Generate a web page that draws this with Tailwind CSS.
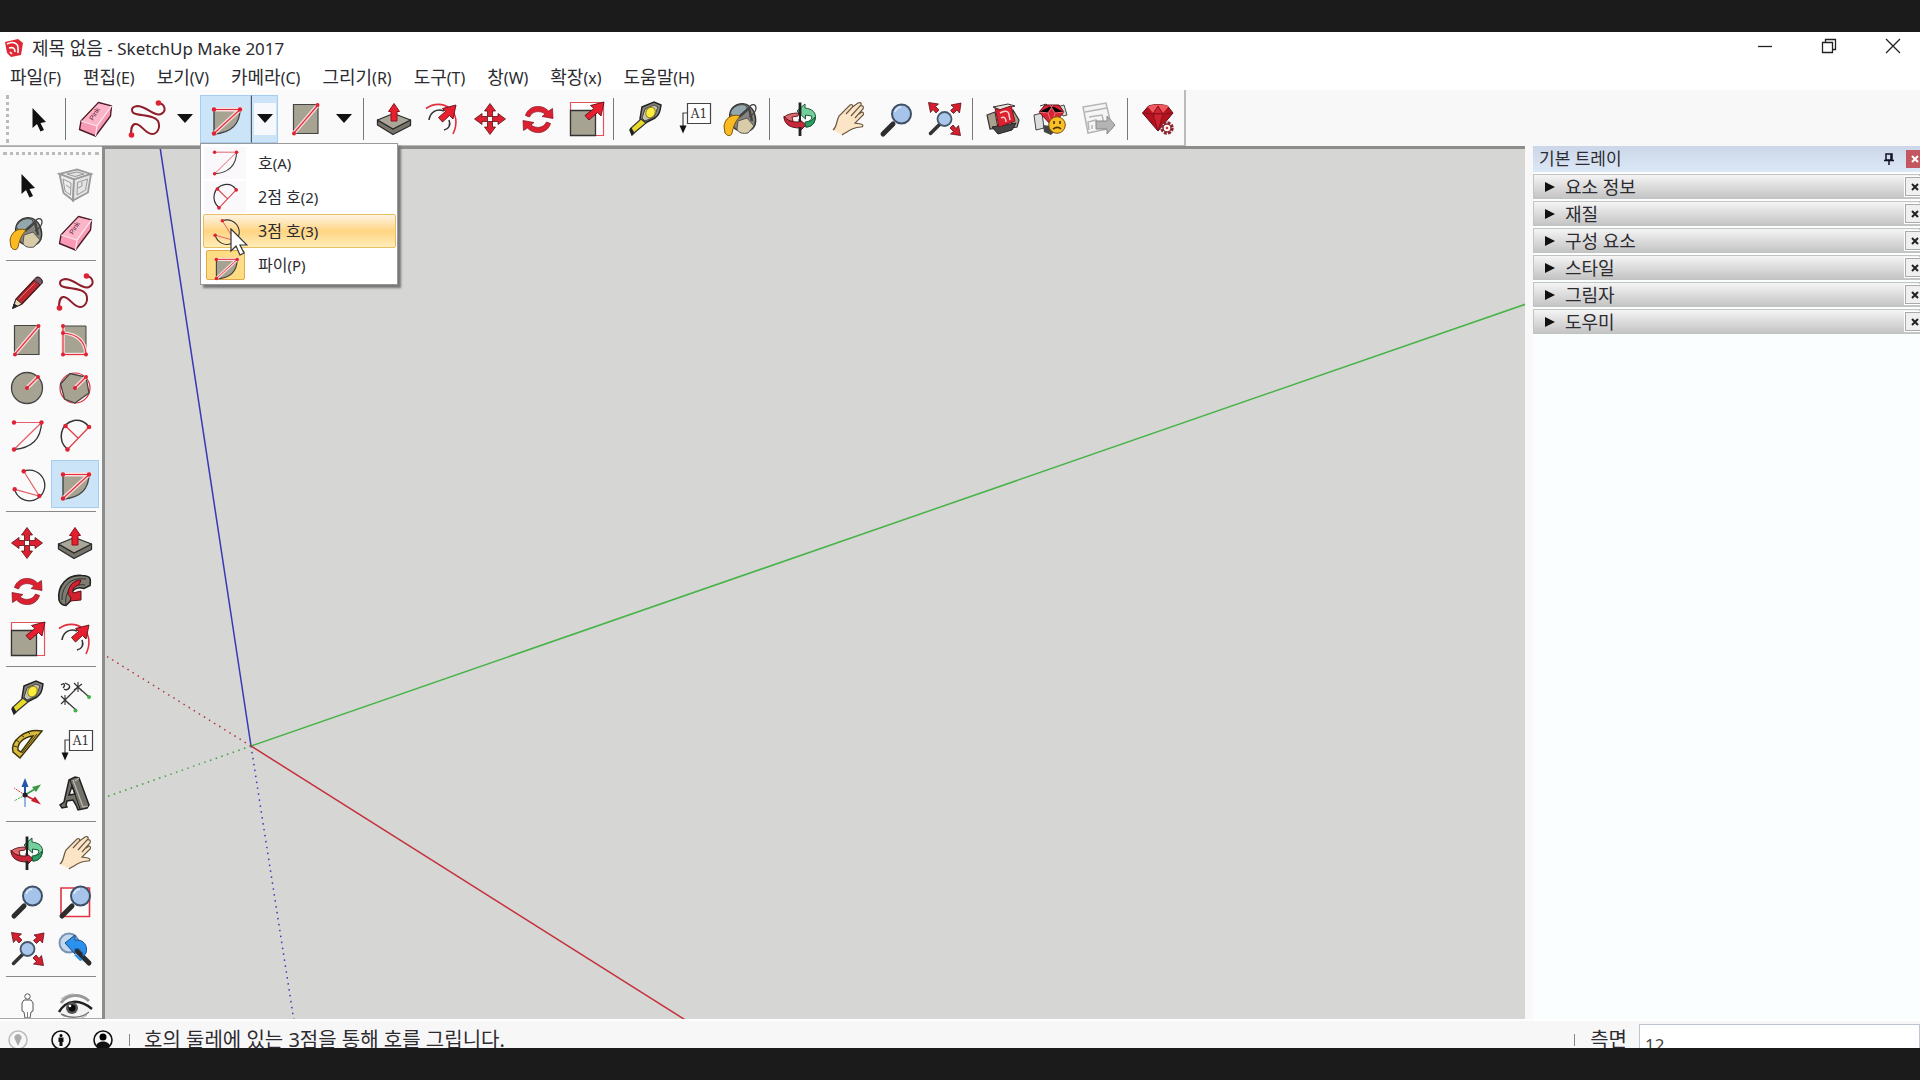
<!DOCTYPE html>
<html lang="ko">
<head>
<meta charset="utf-8">
<title>제목 없음 - SketchUp Make 2017</title>
<script src="https://cdn.jsdelivr.net/npm/@tailwindcss/browser@4"></script>
</head>
<body class="bg-[#1b1b1b] font-['Noto_Sans','Noto_Sans_CJK_KR',sans-serif] text-[#2b2b30]">

<!-- Icon library, 40x40 grid -->
<svg class="hidden" xmlns="http://www.w3.org/2000/svg">
  <defs>
    <g id="magnifier"><path d="M17 25 7 35" stroke="#2d2d2d" stroke-width="5" stroke-linecap="round"/><circle cx="25.500" cy="15" r="9.500" fill="#a6c4ea" stroke="#3f5066" stroke-width="2"/><path d="M19 13a7 7 0 0 1 6-5" fill="none" stroke="#dceafa" stroke-width="1.500"/></g>
  </defs>
  <symbol id="select" viewBox="0 0 40 40"><path d="M14.500 9V29l4.500-4 3.500 7.500 3.500-1.600-3.500-7 5.500-.9Z" fill="#111"/></symbol>
  <symbol id="component" viewBox="0 0 40 40"><g fill="none" stroke="#9a9a9a"><path d="m4.500 9 14.500 5.500L36 9 22 4.500Z" fill="#e2e2e2" stroke-width="1.800"/><path d="m4.500 9 4 19 9.500 7.500 1-21Z" fill="#ececec" stroke-width="1.800"/><path d="M19 14.500 36 9l-3 18.500-15 8Z" fill="#e4e4e4" stroke-width="1.800"/><path d="m8 14 2 12 5.500 4 .5-12ZM22.500 17.500l10-3.500-2 11-8.500 5ZM12 9l8 2.500L29 9l-7-2ZM23 23l4-2v-4M11 20l4 3"/></g></symbol>
  <symbol id="paint" viewBox="0 0 40 40"><path d="M10 11C14 4 24 3 28 7c5 3 8 12 6 19-3 7-12 9-18 5C9 27 7 17 10 11Z" fill="#85847d" stroke="#333" stroke-width="1.400"/><path d="M10 12C14 5 24 4 26 8c1 4-3 8-8 9-5 1-10-1-8-5Z" fill="#93a8ac" stroke="#444"/><path d="m17 22 9-3 7 8-6 7c-5 1-10 0-11-4Z" fill="#d8cba7" stroke="#555"/><path d="M18 18 28 9l3 13" fill="none" stroke="#444" stroke-width="2.500"/><path d="M28 9c2-5 7-4 7 0 0 5-4 7-7 9" fill="none" stroke="#444" stroke-width="1.300"/><path d="M3 27C4 20 10 14 19 17c-4 5-6 8-8 17-1 4-5 3-7 0Z" fill="#fbba22" stroke="#7b5710"/></symbol>
  <symbol id="eraser" viewBox="0 0 40 40"><path d="M23.500 3.500 36.500 7l-1 10-15 20-16-6.500L6 22Z" fill="#f99ab5" stroke="#4d1c2a" stroke-width="1.400" stroke-linejoin="round"/><path d="M23.500 4.500 36 7.500 22 27 7 22Z" fill="#fbb4c8"/><path d="m6 22 16 5L36.500 7M22 27l-1.500 10" fill="none" stroke="#fde3ea" stroke-width="1.300"/><text x="18" y="22" transform="rotate(-58 18 22)" font-family="Liberation Sans" font-size="7" fill="#5c1e33">Pink</text></symbol>
  <symbol id="pencil" viewBox="0 0 40 40"><path d="m6 36 3-9L29 6c2-2 7 1 6 5L15 32Z" fill="#b9282f" stroke="#3d1414" stroke-width="1.300"/><path d="m6 36 3-9 6 5Z" fill="#ead6b4" stroke="#333"/><path d="m6 36 1-4 3 2Z" fill="#222" stroke="#222"/><path d="m27 8 6 5 2-2c1-4-4-7-6-5Z" fill="#7c5560" stroke="#333"/><path d="M12 27 28 11" stroke="#e06767"/></symbol>
  <symbol id="freehand" viewBox="0 0 40 40"><path d="M31.500 4C38 5 40 12 34 15 27 18 20 7 10 7 3 8 4 14 9 15c7 2 18 1 22 7 3 7-1 13-6 13C18 35 14 24 8 25c-4 1-4 6-4 11" fill="none" stroke="#8f1f2b" stroke-width="2"/><circle cx="31.500" cy="4" r="2.800" fill="#dd2233"/><circle cx="4.500" cy="36" r="2.800" fill="#dd2233"/></symbol>
  <symbol id="rect" viewBox="0 0 40 40"><path d="M7.500 5.500H32v29H7.500Z" fill="#a6a392" stroke="#444" stroke-width="1.200"/><path d="M8 34 31.500 6.500" stroke="#fbdcdc" stroke-width="4"/><path d="M8 34 31.500 6.500" stroke="#e0303c" stroke-width="1.200"/><g fill="#dd2233"><circle cx="8" cy="34.500" r="2"/><circle cx="31.500" cy="6" r="2"/></g></symbol>
  <symbol id="rotrect" viewBox="0 0 40 40"><path d="M8 6h23v28H8Z" fill="#a6a392" stroke="#444"/><g fill="none"><path d="M8 6v28.500h23M8 13C22 14 30 20 31 34" stroke="#fbdcdc" stroke-width="3.500"/><path d="M8 6v28.500h23M8 13C22 14 30 20 31 34" stroke="#e0303c" stroke-width="1.200"/></g><g fill="#dd2233"><circle cx="8" cy="6" r="2"/><circle cx="8" cy="13" r="2"/><circle cx="8" cy="34.500" r="2"/><circle cx="31" cy="34.500" r="2"/></g></symbol>
  <symbol id="circle" viewBox="0 0 40 40"><circle cx="20" cy="20" r="15.500" fill="#a6a392" stroke="#444" stroke-width="1.300"/><path d="M20 20 31 9" stroke="#fbdcdc" stroke-width="4"/><path d="M20 20 31 9" stroke="#e0303c" stroke-width="1.200"/><g fill="#dd2233"><circle cx="20" cy="20" r="2"/><circle cx="31" cy="9" r="2"/></g></symbol>
  <symbol id="polygon" viewBox="0 0 40 40"><circle cx="20" cy="20" r="15" fill="#fff" stroke="#e0303c" stroke-width="1.200"/><path d="M5.500 16 15 5.500 31 9l3 16-14 10-10.500-4Z" fill="#a6a392" stroke="#444" stroke-width="1.300"/><path d="M20 20 31 9" stroke="#fbdcdc" stroke-width="4"/><path d="M20 20 31 9" stroke="#e0303c" stroke-width="1.200"/><g fill="#dd2233"><circle cx="20" cy="20" r="2"/><circle cx="31" cy="9" r="2"/></g></symbol>
  <symbol id="arc" viewBox="0 0 40 40"><path d="M34.500 6.500C34 22 25 32 7 33.500" fill="none" stroke="#333" stroke-width="1.300"/><path d="M7 6.500h27.500L7 33.500" fill="none" stroke="#e36068" stroke-width="1.200"/><g fill="#dd2233"><circle cx="7" cy="6.500" r="2.200"/><circle cx="34.500" cy="6.500" r="2.200"/><circle cx="7" cy="33.500" r="2.200"/></g></symbol>
  <symbol id="arc2" viewBox="0 0 40 40"><path d="M12.500 33.500C2 24 5 8 19 4.500 25 3.500 31 6 34 11" fill="none" stroke="#333" stroke-width="1.500"/><path d="M34 11 12.500 33.500M10.500 10 23 22" fill="none" stroke="#e0404a" stroke-width="1.300"/><g fill="#dd2233"><circle cx="10.500" cy="10" r="2.300"/><circle cx="34" cy="11" r="2.300"/><circle cx="12.500" cy="33.500" r="2.300"/></g></symbol>
  <symbol id="arc3" viewBox="0 0 40 40"><path d="M16.700 7.300A15.300 15.300 0 1 1 7.700 25.300" fill="none" stroke="#333" stroke-width="1.300"/><path d="m16.700 7.300 15.600 24.700-24.600-6.700" fill="none" stroke="#e36068" stroke-width="1.200"/><g fill="#dd2233"><circle cx="16.700" cy="7.300" r="2.200"/><circle cx="7.700" cy="25.300" r="2.200"/><circle cx="32.300" cy="32" r="2.200"/></g></symbol>
  <symbol id="pie" viewBox="0 0 40 40"><path d="M8 10h26C34 25 25 34 8 35Z" fill="#a6a392" stroke="#444" stroke-width="1.400"/><path d="M8 10.500h26L8 34.500" fill="none" stroke="#fbdcdc" stroke-width="4"/><path d="M8 10.500h26L8 34.500" fill="none" stroke="#e0303c" stroke-width="1.200"/><g fill="#dd2233"><circle cx="8" cy="10.500" r="2.200"/><circle cx="34" cy="10.500" r="2.200"/><circle cx="8" cy="34.500" r="2.200"/></g></symbol>
  <symbol id="move" viewBox="0 0 40 40"><g fill="#dd2030" stroke="#5d1018" stroke-width=".8"><path id="mv" d="m20 4.500 5.500 7.500h-3v5.500h-5V12h-3Z"/><use href="#mv" transform="rotate(90 20 20)"/><use href="#mv" transform="rotate(180 20 20)"/><use href="#mv" transform="rotate(270 20 20)"/></g></symbol>
  <symbol id="pushpull" viewBox="0 0 40 40"><path d="m3.500 21 15.500 9 17.500-9v5.500L19 35.500l-15.500-9.500Z" fill="#77756a" stroke="#2b2b2b" stroke-width="1.300" stroke-linejoin="round"/><path d="m3.500 21 16-6.500 17 6.500L19 30Z" fill="#aaa798" stroke="#2b2b2b" stroke-width="1.300" stroke-linejoin="round"/><path d="m20 4.500 5.500 8h-2.500V22h-6v-9.500H14.500Z" fill="#e81f2e" stroke="#8a121c"/></symbol>
  <symbol id="rotate" viewBox="0 0 40 40"><g fill="#dd2030" stroke="#7a1620" stroke-width=".7"><path id="rt" d="M7.500 16.500C10 7 23 4 30.500 12l4-2.500.5 10-11-2 3-2.500C22 11 14 12 11.500 18Z"/><use href="#rt" transform="rotate(180 20 20.500)"/></g></symbol>
  <symbol id="followme" viewBox="0 0 40 40"><path d="M4 29C2 15 12 3 27 4.500c9 .5 9 3 8 10l-6 3c-9-3-14 3-13 12l-5 5C7 34 5 32 4 29Z" fill="#7d7c70" stroke="#222" stroke-width="1.600"/><path d="M7 29C7 14 16 6 31 8M11 34C9 20 18 12 30 14" fill="none" stroke="#333"/><path d="M13 23c0-8 6-14 13-14l-2 5c-5 1-7 4-6 8l8-2v9l-11 1 1-3Z" fill="#d3202e" stroke="#5e0e17"/></symbol>
  <symbol id="scale" viewBox="0 0 40 40"><path d="M4.500 3.500h33v33h-33Z" fill="#fff" stroke="#e4525b" stroke-width="1.200"/><path d="M4.500 11.500h25v25h-25Z" fill="#a6a392" stroke="#333" stroke-width="1.300"/><path d="m38 3-3 14-3.500-3.500L23 21l-4-4.500 9-7-3.500-3Z" fill="#e81f2e" stroke="#5d1018" stroke-width=".9"/></symbol>
  <symbol id="offset" viewBox="0 0 40 40"><path d="M4 9.500C20-2 42 12 31 35" fill="none" stroke="#e0303c" stroke-width="1.600"/><path d="M7 21c1-8 8-12 15-9m5 9c2 5 0 9-5 10" fill="none" stroke="#333" stroke-width="1.600"/><path d="m34 6-3 14-3.500-3.500-7 6.500-4-4.500 7-6-3-3Z" fill="#e81f2e" stroke="#5d1018" stroke-width=".9"/></symbol>
  <symbol id="tape" viewBox="0 0 40 40"><path d="m17 8 12-5 7 3c-1 7-2 10-6 13l-10 5-5-4Z" fill="#85827a" stroke="#222" stroke-width="1.500"/><path d="m20 10 9-4 4 2-4 10-9 4-3-3Z" fill="#c6c3b3" stroke="#444"/><ellipse cx="25.500" cy="13.500" rx="4.500" ry="5.500" transform="rotate(28 25.500 13.500)" fill="#ffed3d" stroke="#8b8220"/><path d="m16 20 5 4L9 34l-3-5Z" fill="#e8da2a" stroke="#333" stroke-width="1.200"/><path d="m6 29-1 2 2 5 2-2" fill="#222" stroke="#222" stroke-width="1.500"/></symbol>
  <symbol id="dimension" viewBox="0 0 40 40"><path d="M23 9 34 19M10 22l11 10M10 22 23 9M19 5l8 8M6 18l8 8M23 4v10M10 17v10M27 6 19 12M14 18 6 26" stroke="#333" stroke-width="1.100"/><g fill="#3fae45"><circle cx="34" cy="19" r="2"/><circle cx="20.500" cy="32.500" r="2"/></g><path d="M6 7c3-3 5 0 2 3M10 5l4 2c2 3-2 6-5 4" fill="none" stroke="#333" stroke-width="1.300"/></symbol>
  <symbol id="protractor" viewBox="0 0 40 40"><path fill-rule="evenodd" d="M35 5C18 2 3 15 6 26l7 6ZM26 10C17 11 10 17 11 24l3 2Z" fill="#d8ba3c" stroke="#3d340e" stroke-width="1.500"/><path d="m7 20 3 1M9 14l3 2m2-7 3 2m4-5 2 2M15 27l15-19" stroke="#3d340e"/></symbol>
  <symbol id="text" viewBox="0 0 40 40"><path d="M14 14H10v16" fill="none" stroke="#444" stroke-width="1.200"/><path d="M6.500 26.500h7L10 34.500Z" fill="#111"/><path d="M14.500 4.500h23v20h-23Z" fill="#fff" stroke="#444" stroke-width="1.200"/><text x="26" y="18.500" text-anchor="middle" font-family="DejaVu Serif" font-size="12" fill="#333">A1</text></symbol>
  <symbol id="axes" viewBox="0 0 40 40"><path d="M18 21 7 14" stroke="#d33" stroke-dasharray="2 1"/><path d="m18 21-11 6" stroke="#3a4" stroke-dasharray="2 1"/><path d="M18 21v12" stroke="#99b5e4" stroke-width="2"/><path d="M18 21V10" stroke="#2654a8" stroke-width="2"/><path d="m14.500 13 3.500-9 3.500 9Z" fill="#2654a8"/><path d="m18 21 10-6" stroke="#3a9b45" stroke-width="1.500"/><path d="m25 13 9-2.500-5 7.500Z" fill="#3a9b45"/><path d="m18 21 11 6" stroke="#c8202c" stroke-width="1.500"/><path d="m24 27 10 3.500-6-8Z" fill="#c8202c"/><circle cx="18" cy="21" r="2.500" fill="#222"/></symbol>
  <symbol id="text3d" viewBox="0 0 40 40"><path fill-rule="evenodd" d="m14 6 6-3 4 1 10 27-2 3-9 2-2-5-3-5-6 1-1 4 1 2-5 1-2-3 4-3Zm3 6-3 9 6-1Z" fill="#73726a" stroke="#222" stroke-width="1.500"/><path d="m18 6 10 27 5-1M24 4l-4 3" fill="none" stroke="#bdbbb0" stroke-width="1.200"/><path d="m15 6 10 29" stroke="#222"/></symbol>
  <symbol id="orbit" viewBox="0 0 40 40"><path d="M19 14c-8 0-14 2-15 5 2 4 5 4 9 3l-1-4 6-1Z" fill="#dc6a6e" stroke="#6a1c24"/><path d="M4 17c0 9 7 12 16 12v3l6-6-7-6v3c-8 0-11-1-15-6" fill="#c7283a" stroke="#5a131d"/><path d="M17 12 25 5v4c8 1 11 5 10.500 10-1 6-4 9-10 9l1-5c4-1 6-3 5-6l-6-1v4Z" fill="#75cf9c" stroke="#1c5a3a"/><path d="M35 18c0 7-4 10-9 10l-1-5c5 0 8-2 10-5" fill="#2fa065" stroke="#1c5a3a"/><path d="M20 3.500v12M20 28v9" stroke="#222" stroke-width="2.800"/><path d="M20 14v9" stroke="#222" stroke-width="2"/></symbol>
  <symbol id="hand" viewBox="0 0 40 40"><path d="M5 31c4-3 3-8 6-14L22 6c2-1 3 0 2.500 2L30 4c2-1 4 0 3 2l-1 1c3-1 4 1 3 3l-4 5 3-2c2 0 2 3 0 4l-7 7 6 1c3 1 2 3 0 3-7 0-11 3-19 8Z" fill="#fce5c6"/><path d="M5 31c4-3 3-8 6-14L22 6c2-1 3 0 2.500 2L18 15m6.500-7L30 4c2-1 4 0 3 2L23 17m9-10c3-1 4 1 3 3l-8 9m4-4 3-2c2 0 2 3 0 4l-7 7 6 1c3 1 2 3 0 3-7 0-11 3-19 8" fill="none" stroke="#695842" stroke-width="1.200"/></symbol>
  <symbol id="zoom" viewBox="0 0 40 40"><use href="#magnifier"/></symbol>
  <symbol id="zoomwin" viewBox="0 0 40 40"><path d="M6 7h28.500v28.500H6Z" fill="#fff" stroke="#df3440" stroke-width="1.600"/><use href="#magnifier"/></symbol>
  <symbol id="extents" viewBox="0 0 40 40"><path d="M16 25 6.500 34.500" stroke="#333" stroke-width="3.500" stroke-linecap="round"/><circle cx="20.500" cy="20" r="7" fill="#a9c8ec" stroke="#46566a" stroke-width="1.800"/><g fill="#d51f2e" stroke="#5d1018" stroke-width=".8"><path id="ex" d="m37 4-10 2 3 2.500-3.500 3 3 3L33 11l2.500 3Z"/><use href="#ex" transform="rotate(90 20.500 20)"/><use href="#ex" transform="rotate(270 20.500 20)"/></g></symbol>
  <symbol id="previous" viewBox="0 0 40 40"><circle cx="14" cy="14" r="9.500" fill="#c3d8ee" stroke="#7793b3" stroke-width="2"/><path d="m22 22 12 12" stroke="#2a2a2a" stroke-width="5" stroke-linecap="round"/><path d="M10 14 20 6v5c9-1 13 6 11 13l-3 4c0-6-3-9-8-8v5Z" fill="#2b91ee" stroke="#174b85"/><path d="m21 25 7 6-3 1-6-6Z" fill="#2b91ee"/></symbol>
  <symbol id="person" viewBox="0 0 40 40"><path d="M17 12h7l2 3v8l-2 1-1 6h-5l-1-6-2-1v-8Z" fill="#fff" stroke="#555"/><circle cx="20.500" cy="8.500" r="2.700" fill="#fff" stroke="#555"/><path d="M20.500 24v6" stroke="#777"/><path d="M16 31h3m3 0h3" stroke="#d33" stroke-width="1.500"/></symbol>
  <symbol id="eye" viewBox="0 0 40 40"><path d="M6 15C12 6 25 5 34 13" fill="none" stroke="#999" stroke-width="3"/><path d="M4 24C11 13 24 11 37 21c-8 8-25 9-33 3Z" fill="#f3f3f3"/><path d="M4 24C11 12 24 10 37 21" fill="none" stroke="#222" stroke-width="2.500"/><path d="M6 26c9 5 21 4 28-2" fill="none" stroke="#777" stroke-width="1.500"/><circle cx="17" cy="20" r="6" fill="#555"/><circle cx="17" cy="20" r="3.500" fill="#080808"/><circle cx="15" cy="18" r="1.300" fill="#fff"/><path d="M8 30c9 3 17 2 24-3M6 11c4-3 8-5 13-5" fill="none" stroke="#aaa"/></symbol>
  <symbol id="warehouse" viewBox="0 0 40 40"><path d="m4 16 8-3 3 16-8 1Zm26-5 6 10-2 7-6 1Z" fill="#aaa28f" stroke="#333" stroke-width="1.200"/><path d="m9 28 24-4-4 7-14 4Z" fill="#444" stroke="#222"/><path d="m10 8 15-3 7 2-14 4Z" fill="#e8e4dc" stroke="#333"/><path d="m12 9 4 2 12-4 4 15-16 6Z" fill="#dc2231" stroke="#7e1620"/><path d="M17 14c5-3 9-2 9 2l1 5M18 19c3-2 5 0 5 4" fill="none" stroke="#fbd0d3" stroke-width="1.500"/></symbol>
  <symbol id="extwarehouse" viewBox="0 0 40 40"><path d="m3 16 8-2 2 15-8 2ZM26 8l7-2 3 10-4 1ZM9 7l6-2 3 3" fill="#ddd" stroke="#444"/><path d="m12 26 16 2-8 8-7-3Z" fill="#444"/><path d="m8 13 6-7h14l5 7-12 14Z" fill="#d92432" stroke="#5e1018"/><path d="m8 13 9 1 5-8m-5 8 4 12m12-13-9 1-5-8m5 8-3 12" stroke="#ee7078"/><circle cx="26" cy="26" r="8.300" fill="#f9c026" stroke="#754f0d"/><path d="M23 22v3m6-3v3m-7 5c3-2 6-2 8 0" stroke="#4b3100" stroke-width="1.600" fill="none"/></symbol>
  <symbol id="share" viewBox="0 0 40 40"><path d="m4 8 23-4 6 25-24 5Z" fill="#f5f5f5" stroke="#b5b5b5" stroke-width="1.500"/><path d="m6 13 22-4M10 18l13-2 3 12M10 31l-1-8 8-2 2 8m-6 1v-4" fill="none" stroke="#b5b5b5" stroke-width="1.500"/><path d="M17 22h11v-5l8 9-8 9v-5H17Z" fill="#b4b4b4" stroke="#888"/></symbol>
  <symbol id="extmanager" viewBox="0 0 40 40"><path d="m4.500 14 6-7c6-2 13-2 19 0l5.500 7-15 18Z" fill="#b4121f" stroke="#5e0e17"/><path d="m10 8 5 6 5-7 5 7 5-6v-1c-6-2-13-2-19 0Z" fill="#ef5a60"/><path d="m4.500 14 10.500 1 5-8 5 8 10-1M15 15l5 17 5-17Z" fill="#cf2430" stroke="#780f1a" stroke-width=".8"/><circle cx="29" cy="29" r="5.500" fill="#fff" stroke="#8a2630" stroke-width="2.500" stroke-dasharray="3 1.300"/><circle cx="29" cy="29" r="4" fill="none" stroke="#8a2630" stroke-width="1.500"/><circle cx="29" cy="29" r="1.300" fill="#c33"/></symbol>
</svg>

<div class="flex h-screen flex-col overflow-hidden py-8">
  <div class="relative flex min-h-0 grow flex-col bg-[#f8f8f8]">

    <!-- Title bar -->
    <header class="flex h-8 shrink-0 items-center bg-white pl-1">
      <svg class="size-5" viewBox="0 0 20 20"><path d="M1 4 14 1l5 4-2 12-10 2-4-4Z" fill="#dd2a36"/><path d="M3 6c6-3 11-1 11 4v5M5 10c4-1 6 0 6 4M6 14l2 2" fill="none" stroke="#fff" stroke-width="1.600"/></svg>
      <h1 class="ml-2 text-[17px] leading-6"><span class="text-[18px]">제목 없음</span> - SketchUp Make 2017</h1>
      <div class="mr-[3px] ml-auto flex self-start">
        <button aria-label="최소화" class="grid h-7 w-16 place-items-center"><svg class="size-4" viewBox="0 0 16 16"><path d="M1 8.500h14" stroke="#222" stroke-width="1.300"/></svg></button>
        <button aria-label="이전 크기로" class="grid h-7 w-16 place-items-center"><svg class="size-4" viewBox="0 0 16 16"><path d="M1.500 4.500h10v10h-10ZM4.500 4.500v-3h10v10h-3" fill="none" stroke="#222" stroke-width="1.300"/></svg></button>
        <button aria-label="닫기" class="grid h-7 w-14 place-items-center"><svg class="ml-2 size-4" viewBox="0 0 16 16"><path d="m1 1 14 14M15 1 1 15" stroke="#222" stroke-width="1.300"/></svg></button>
      </div>
    </header>

    <!-- Menu bar -->
    <nav class="flex h-[26px] shrink-0 items-center gap-[22px] bg-white pl-[10px] text-base leading-6 [&_span]:text-[18px]">
      <button><span>파일</span>(F)</button><button><span>편집</span>(E)</button><button><span>보기</span>(V)</button><button><span>카메라</span>(C)</button><button><span>그리기</span>(R)</button><button><span>도구</span>(T)</button><button><span>창</span>(W)</button><button><span>확장</span>(x)</button><button><span>도움말</span>(H)</button>
    </nav>

    <!-- Main toolbar -->
    <div class="flex h-14 shrink-0">
      <div role="toolbar" class="flex items-center border-r-2 border-b border-[#bbb] bg-[#fbfafb] pt-[3px]">
        <div class="mr-[5px] ml-[6px] h-12 border-l-3 border-dotted border-[#bbb]"></div>
        <button aria-label="선택" class="grid h-12 w-12 place-items-center"><svg class="size-10"><use href="#select"/></svg></button>
        <div class="mr-[5px] ml-[3px] h-[42px] w-px bg-[#777]"></div>
        <button aria-label="지우개" class="grid h-12 w-12 place-items-center"><svg class="size-10"><use href="#eraser"/></svg></button>
        <button aria-label="자유선" class="grid h-12 w-14 place-items-center"><svg class="size-10"><use href="#freehand"/></svg></button>
        <button aria-label="선 도구" class="mr-[5px] grid h-12 w-5 place-items-center"><svg class="h-[10px] w-4" viewBox="0 0 16 10"><path d="M0 0h16L8 9Z" fill="#111"/></svg></button>
        <div class="relative mr-[2px] flex">
          <button aria-label="파이" class="grid h-12 w-[51px] place-items-center border border-[#a5cdf0] bg-[#cce4f8]"><svg class="size-10"><use href="#pie"/></svg></button>
          <button aria-label="호 도구" aria-expanded="true" class="grid h-12 w-[27px] place-items-center border border-l-[#555] border-[#a5cdf0] bg-[#cce4f8]"><span class="grid h-8 w-[22px] place-items-center bg-[#f7f8fb]"><svg class="h-[10px] w-4" viewBox="0 0 16 10"><path d="M0 0h16L8 9Z" fill="#111"/></svg></span></button>

          <div role="menu" class="absolute top-12 left-0 z-10 flex w-[198px] flex-col border border-[#999] bg-white py-[2px] pl-[2px] pr-px text-base leading-6 shadow-[3px_3px_2px_#777]">
            <button role="menuitem" class="flex h-[34px] items-center border border-transparent"><span class="grid h-full w-[42px] place-items-center bg-[#faf8fa]"><svg class="size-8"><use href="#arc"/></svg></span><span class="ml-3">호<span class="text-[15px]">(A)</span></span></button>
            <button role="menuitem" class="flex h-[34px] items-center border border-transparent"><span class="grid h-full w-[42px] place-items-center bg-[#faf8fa]"><svg class="size-8"><use href="#arc2"/></svg></span><span class="ml-3">2점 호<span class="text-[15px]">(2)</span></span></button>
            <button role="menuitem" class="flex h-[34px] items-center rounded-xs border border-[#e6bf62] bg-linear-to-b from-[#fff3e2] via-[#ffd582] to-[#ffecb8]"><span class="grid h-full w-[42px] place-items-center"><svg class="size-8"><use href="#arc3"/></svg></span><span class="ml-3">3점 호<span class="text-[15px]">(3)</span></span></button>
            <button role="menuitem" class="flex h-[34px] items-center border border-transparent"><span class="mr-px ml-[2px] grid h-[30px] w-[39px] place-items-center rounded-xs border border-[#e0a94c] bg-[#fddc83]"><svg class="size-8"><use href="#pie"/></svg></span><span class="ml-3">파이<span class="text-[15px]">(P)</span></span></button>
            <svg class="absolute top-[84px] left-[29px] h-[30px] w-[18px]" viewBox="0 0 18 30"><path d="M1 1v22l5-5 4 9 4-2-4-8h7Z" fill="#fff" stroke="#333" stroke-width="1.200"/></svg>
          </div>
        </div>
        <button aria-label="직사각형" class="grid h-12 w-[52px] place-items-center"><svg class="size-10"><use href="#rect"/></svg></button>
        <button aria-label="도형 도구" class="grid h-12 w-6 place-items-center"><svg class="h-[10px] w-4" viewBox="0 0 16 10"><path d="M0 0h16L8 9Z" fill="#111"/></svg></button>
        <div class="mr-[6px] ml-[7px] h-[42px] w-px bg-[#777]"></div>
        <button aria-label="밀기/끌기" class="grid h-12 w-12 place-items-center"><svg class="size-10"><use href="#pushpull"/></svg></button>
        <button aria-label="오프셋" class="grid h-12 w-12 place-items-center"><svg class="size-10"><use href="#offset"/></svg></button>
        <button aria-label="이동" class="grid h-12 w-12 place-items-center"><svg class="size-10"><use href="#move"/></svg></button>
        <button aria-label="회전" class="grid h-12 w-12 place-items-center"><svg class="size-10"><use href="#rotate"/></svg></button>
        <button aria-label="배율" class="grid h-12 w-12 place-items-center"><svg class="size-10"><use href="#scale"/></svg></button>
        <div class="mr-[7px] ml-[3px] h-[42px] w-px bg-[#777]"></div>
        <button aria-label="줄자" class="grid h-12 w-12 place-items-center"><svg class="size-10"><use href="#tape"/></svg></button>
        <button aria-label="텍스트" class="grid h-12 w-12 place-items-center"><svg class="size-10"><use href="#text"/></svg></button>
        <button aria-label="페인트통" class="grid h-12 w-12 place-items-center"><svg class="size-10"><use href="#paint"/></svg></button>
        <div class="mr-[6px] ml-1 h-[42px] w-px bg-[#777]"></div>
        <button aria-label="궤도" class="grid h-12 w-12 place-items-center"><svg class="size-10"><use href="#orbit"/></svg></button>
        <button aria-label="이동 보기" class="grid h-12 w-12 place-items-center"><svg class="size-10"><use href="#hand"/></svg></button>
        <button aria-label="확대/축소" class="grid h-12 w-12 place-items-center"><svg class="size-10"><use href="#zoom"/></svg></button>
        <button aria-label="범위 확대" class="grid h-12 w-12 place-items-center"><svg class="size-10"><use href="#extents"/></svg></button>
        <div class="mr-[6px] ml-1 h-[42px] w-px bg-[#777]"></div>
        <button aria-label="3D 웨어하우스" class="grid h-12 w-12 place-items-center"><svg class="size-10"><use href="#warehouse"/></svg></button>
        <button aria-label="확장 웨어하우스" class="grid h-12 w-12 place-items-center"><svg class="size-10"><use href="#extwarehouse"/></svg></button>
        <button aria-label="공유" class="grid h-12 w-12 place-items-center"><svg class="size-10"><use href="#share"/></svg></button>
        <div class="mr-[6px] ml-1 h-[42px] w-px bg-[#777]"></div>
        <button aria-label="확장 관리자" class="mr-[2px] grid h-12 w-12 place-items-center"><svg class="size-10"><use href="#extmanager"/></svg></button>
      </div>
    </div>

    <!-- Workspace -->
    <div class="flex min-h-0 grow">
      <aside class="w-[102px] shrink-0 overflow-hidden border-y border-[#aaa] bg-[#fbfafb] px-[3px]">
        <div class="mt-[5px] mb-[6px] border-t-3 border-dotted border-[#bbb]"></div>
        <div class="grid grid-cols-[48px_48px] [&>button]:grid [&>button]:h-12 [&>button]:place-items-center [&>hr]:col-span-2 [&>hr]:mx-[3px] [&>hr]:mt-[3px] [&>hr]:mb-[7px] [&>hr]:border-[#888]">
          <button aria-label="선택"><svg class="size-10"><use href="#select"/></svg></button>
          <button aria-label="구성 요소 만들기"><svg class="size-10"><use href="#component"/></svg></button>
          <button aria-label="페인트통"><svg class="size-10"><use href="#paint"/></svg></button>
          <button aria-label="지우개"><svg class="size-10"><use href="#eraser"/></svg></button>
          <hr>
          <button aria-label="선"><svg class="size-10"><use href="#pencil"/></svg></button>
          <button aria-label="자유선"><svg class="size-10"><use href="#freehand"/></svg></button>
          <button aria-label="직사각형"><svg class="size-10"><use href="#rect"/></svg></button>
          <button aria-label="회전된 직사각형"><svg class="size-10"><use href="#rotrect"/></svg></button>
          <button aria-label="원"><svg class="size-10"><use href="#circle"/></svg></button>
          <button aria-label="다각형"><svg class="size-10"><use href="#polygon"/></svg></button>
          <button aria-label="호"><svg class="size-10"><use href="#arc"/></svg></button>
          <button aria-label="2점 호"><svg class="size-10"><use href="#arc2"/></svg></button>
          <button aria-label="3점 호"><svg class="size-10"><use href="#arc3"/></svg></button>
          <button aria-label="파이" class="border border-[#a5cdf0] bg-[#cce4f8]"><svg class="size-10"><use href="#pie"/></svg></button>
          <hr>
          <button aria-label="이동"><svg class="size-10"><use href="#move"/></svg></button>
          <button aria-label="밀기/끌기"><svg class="size-10"><use href="#pushpull"/></svg></button>
          <button aria-label="회전"><svg class="size-10"><use href="#rotate"/></svg></button>
          <button aria-label="따라가기"><svg class="size-10"><use href="#followme"/></svg></button>
          <button aria-label="배율"><svg class="size-10"><use href="#scale"/></svg></button>
          <button aria-label="오프셋"><svg class="size-10"><use href="#offset"/></svg></button>
          <hr>
          <button aria-label="줄자"><svg class="size-10"><use href="#tape"/></svg></button>
          <button aria-label="치수"><svg class="size-10"><use href="#dimension"/></svg></button>
          <button aria-label="각도기"><svg class="size-10"><use href="#protractor"/></svg></button>
          <button aria-label="텍스트"><svg class="size-10"><use href="#text"/></svg></button>
          <button aria-label="축"><svg class="size-10"><use href="#axes"/></svg></button>
          <button aria-label="3D 텍스트"><svg class="size-10"><use href="#text3d"/></svg></button>
          <hr>
          <button aria-label="궤도"><svg class="size-10"><use href="#orbit"/></svg></button>
          <button aria-label="이동 보기"><svg class="size-10"><use href="#hand"/></svg></button>
          <button aria-label="확대/축소"><svg class="size-10"><use href="#zoom"/></svg></button>
          <button aria-label="창 확대"><svg class="size-10"><use href="#zoomwin"/></svg></button>
          <button aria-label="범위 확대"><svg class="size-10"><use href="#extents"/></svg></button>
          <button aria-label="이전"><svg class="size-10"><use href="#previous"/></svg></button>
          <hr>
          <button aria-label="카메라 배치"><svg class="size-10"><use href="#person"/></svg></button>
          <button aria-label="둘러보기"><svg class="size-10"><use href="#eye"/></svg></button>
        </div>
      </aside>

      <!-- Modelling viewport with the drawing axes -->
      <main class="min-w-0 grow overflow-hidden border-t-3 border-l-3 border-[#8c8c8a] bg-[#d6d6d4]">
        <svg class="size-full" fill="none" stroke-width="1.500">
          <path d="M146 597 55-2" stroke="#3a36b8"/>
          <path d="M146 597 1421 155" stroke="#46b346"/>
          <path d="m146 597 436 275" stroke="#c4303c"/>
          <g stroke-dasharray="1.500 4.500">
            <path d="m146 597 43 275" stroke="#3a36b8"/>
            <path d="M146 597-2 649" stroke="#3f9f3f"/>
            <path d="M146 597-2 505" stroke="#b8303c"/>
          </g>
        </svg>
      </main>

      <aside class="ml-2 w-[387px] shrink-0 overflow-hidden bg-[#fbfeff]">
        <div class="flex h-[26px] items-center bg-linear-to-b from-[#cbd6e8] to-[#dce8f6] pl-[6px]">
          <h2 class="text-[17px] leading-6">기본 트레이</h2>
          <button aria-label="자동 숨기기" class="ml-auto"><svg class="h-3 w-[10px]" viewBox="0 0 10 12"><path d="M2 1h6v6H2ZM0 7.500h10M5 8v4M7 1v6" fill="none" stroke="#112" stroke-width="1.500"/></svg></button>
          <button aria-label="닫기" class="-mr-1 ml-3 grid h-[18px] w-[18px] place-items-center bg-[#c4565f]"><svg class="size-2" viewBox="0 0 8 8"><path d="m1 1 6 6M7 1 1 7" stroke="#fff" stroke-width="2"/></svg></button>
        </div>
        <div class="mt-[2px] flex flex-col gap-[2px] text-[18px] leading-[22px] [&>div]:flex [&>div]:h-[25px] [&>div]:items-center [&>div]:border [&>div]:border-[#c3c3c3] [&>div]:bg-linear-to-b [&>div]:from-[#f5f5f5] [&>div]:to-[#c4c4c4]">
          <div><button class="flex grow items-center gap-[10px] pl-[11px]"><svg class="h-[10px] w-[10px]" viewBox="0 0 10 10"><path d="M0 0v10l10-5Z" fill="#111"/></svg>요소 정보</button><button aria-label="닫기" class="-mr-[6px] grid h-[19px] w-5 place-items-center border border-[#aaa] bg-[#f0f0f0] shadow-[0_0_0_1px_#fff]"><svg class="size-2" viewBox="0 0 8 8"><path d="m1 1 6 6M7 1 1 7" stroke="#222" stroke-width="2"/></svg></button></div>
          <div><button class="flex grow items-center gap-[10px] pl-[11px]"><svg class="h-[10px] w-[10px]" viewBox="0 0 10 10"><path d="M0 0v10l10-5Z" fill="#111"/></svg>재질</button><button aria-label="닫기" class="-mr-[6px] grid h-[19px] w-5 place-items-center border border-[#aaa] bg-[#f0f0f0] shadow-[0_0_0_1px_#fff]"><svg class="size-2" viewBox="0 0 8 8"><path d="m1 1 6 6M7 1 1 7" stroke="#222" stroke-width="2"/></svg></button></div>
          <div><button class="flex grow items-center gap-[10px] pl-[11px]"><svg class="h-[10px] w-[10px]" viewBox="0 0 10 10"><path d="M0 0v10l10-5Z" fill="#111"/></svg>구성 요소</button><button aria-label="닫기" class="-mr-[6px] grid h-[19px] w-5 place-items-center border border-[#aaa] bg-[#f0f0f0] shadow-[0_0_0_1px_#fff]"><svg class="size-2" viewBox="0 0 8 8"><path d="m1 1 6 6M7 1 1 7" stroke="#222" stroke-width="2"/></svg></button></div>
          <div><button class="flex grow items-center gap-[10px] pl-[11px]"><svg class="h-[10px] w-[10px]" viewBox="0 0 10 10"><path d="M0 0v10l10-5Z" fill="#111"/></svg>스타일</button><button aria-label="닫기" class="-mr-[6px] grid h-[19px] w-5 place-items-center border border-[#aaa] bg-[#f0f0f0] shadow-[0_0_0_1px_#fff]"><svg class="size-2" viewBox="0 0 8 8"><path d="m1 1 6 6M7 1 1 7" stroke="#222" stroke-width="2"/></svg></button></div>
          <div><button class="flex grow items-center gap-[10px] pl-[11px]"><svg class="h-[10px] w-[10px]" viewBox="0 0 10 10"><path d="M0 0v10l10-5Z" fill="#111"/></svg>그림자</button><button aria-label="닫기" class="-mr-[6px] grid h-[19px] w-5 place-items-center border border-[#aaa] bg-[#f0f0f0] shadow-[0_0_0_1px_#fff]"><svg class="size-2" viewBox="0 0 8 8"><path d="m1 1 6 6M7 1 1 7" stroke="#222" stroke-width="2"/></svg></button></div>
          <div><button class="flex grow items-center gap-[10px] pl-[11px]"><svg class="h-[10px] w-[10px]" viewBox="0 0 10 10"><path d="M0 0v10l10-5Z" fill="#111"/></svg>도우미</button><button aria-label="닫기" class="-mr-[6px] grid h-[19px] w-5 place-items-center border border-[#aaa] bg-[#f0f0f0] shadow-[0_0_0_1px_#fff]"><svg class="size-2" viewBox="0 0 8 8"><path d="m1 1 6 6M7 1 1 7" stroke="#222" stroke-width="2"/></svg></button></div>
        </div>
      </aside>
    </div>

    <!-- Status bar, cut off by the lower edge of the frame -->
    <footer class="h-[29px] shrink-0 overflow-hidden border-t-2 border-white bg-[#f8f7f8]">
      <div class="flex h-[38px] items-center pl-2 text-[20px] leading-6">
        <button aria-label="위치"><svg class="size-5" viewBox="0 0 20 20"><circle cx="10" cy="10" r="9" fill="none" stroke="#bbb" stroke-width="1.500"/><path d="M10 16 7 9.500a3.500 3.500 0 1 1 6 0Z" fill="#aaa"/></svg></button>
        <button aria-label="크레딧" class="ml-[23px]"><svg class="size-5" viewBox="0 0 20 20"><circle cx="10" cy="10" r="9" fill="none" stroke="#111" stroke-width="1.600"/><circle cx="10" cy="5.500" r="1.500"/><path d="M7.500 7.500h5v4.500h-1v4h-3v-4h-1Z" fill="#111"/></svg></button>
        <button aria-label="로그인" class="ml-[22px]"><svg class="size-5" viewBox="0 0 20 20"><circle cx="10" cy="10" r="9" fill="none" stroke="#111" stroke-width="1.600"/><circle cx="10" cy="7" r="3.500"/><path d="M3.500 16c0-6 13-6 13 0-3 4-10 4-13 0Z" fill="#111"/></svg></button>
        <div class="ml-4 h-3 w-px bg-[#888]"></div>
        <p class="ml-[14px]">호의 둘레에 있는 3점을 통해 호를 그립니다.</p>
        <div class="ml-auto h-3 w-px bg-[#888]"></div>
        <label for="vcb" class="mr-3 ml-[15px]">측면</label>
        <input id="vcb" value="12" class="mt-[8px] h-10 w-[281px] border border-[#bfc5d0] bg-white pl-[5px] text-[17px] text-[#444]">
      </div>
    </footer>
  </div>
</div>
</body>
</html>
